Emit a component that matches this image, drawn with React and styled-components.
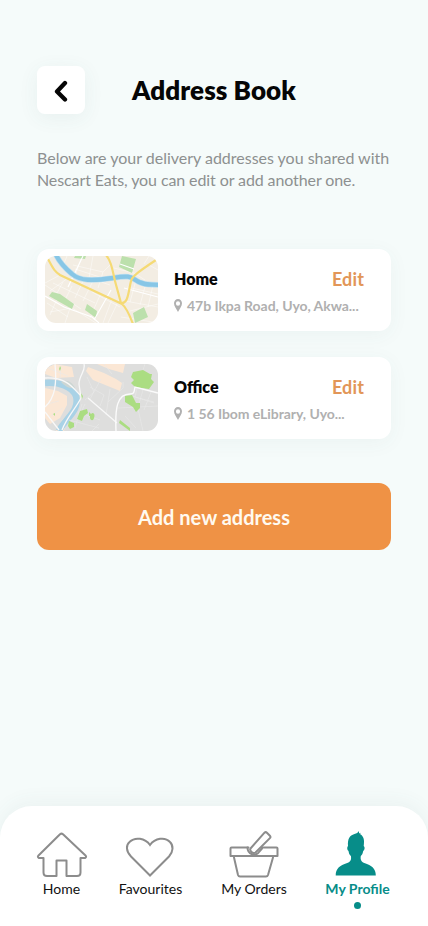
import React from "react";
import styled, { createGlobalStyle } from "styled-components";

const GlobalStyle = createGlobalStyle`
  * { box-sizing: border-box; }
  body { margin: 0; background: #f5fbfa; font-family: Lato, sans-serif; }
  button { font-family: inherit; border: 0; padding: 0; cursor: pointer; }
`;

const Screen = styled.div`
  width: 428px;
  height: 926px;
  display: flex;
  flex-direction: column;
  overflow: hidden;
  background: #f5fbfa;
`;

const Header = styled.header`
  display: flex;
  align-items: center;
  gap: 47px;
  height: 48px;
  margin: 66px 37px 0;
`;

const BackButton = styled.button`
  width: 48px;
  height: 48px;
  display: grid;
  place-items: center;
  border-radius: 8px;
  background: #fff;
  box-shadow: 0 4px 20px rgba(60, 100, 100, 0.07);
`;

const Title = styled.h1`
  margin: 0;
  font-size: 26px;
  line-height: 32px;
  font-weight: 800;
  letter-spacing: 0.08px;
  color: #050505;
  white-space: nowrap;
`;

const Intro = styled.p`
  margin: 33px 0 0 37px;
  font-size: 16px;
  line-height: 22px;
  color: #8d9090;
  white-space: nowrap;
`;

const IntroLine = styled.span`
  display: block;
  letter-spacing: ${(p) => p.$tracking}px;
`;

const AddressList = styled.section`
  display: flex;
  flex-direction: column;
  gap: 26px;
  margin: 58px 37px 0;
`;

const AddressCard = styled.article`
  display: flex;
  height: 82px;
  padding: 7px 8px;
  border-radius: 12px;
  background: #fff;
  box-shadow: 0 4px 20px rgba(60, 100, 100, 0.05);
`;

const MapThumb = styled.svg`
  display: block;
  flex: none;
  width: 113px;
  height: 67px;
  border-radius: 11px;
`;

const AddressBody = styled.div`
  flex: 1;
  margin-left: 16px;
  padding-top: 11px;
`;

const AddressTop = styled.div`
  display: flex;
  justify-content: space-between;
  align-items: center;
  height: 24px;
  padding-right: 19px;
`;

const AddressName = styled.h2`
  margin: 0 0 2px;
  font-size: 16px;
  font-weight: 800;
  color: #050505;
`;

const EditButton = styled.button`
  background: none;
  color: #e29658;
  font-size: 18px;
  font-weight: 700;
  letter-spacing: 0.15px;
`;

const AddressLine = styled.div`
  display: flex;
  align-items: center;
  gap: 5px;
  height: 18px;
  margin-top: 5px;
  font-size: 14px;
  font-weight: 700;
  letter-spacing: -0.05px;
  color: #b0b0b0;
  white-space: nowrap;
`;

const AddButton = styled.button`
  height: 67px;
  margin: 44px 37px 0;
  padding-top: 1px;
  border-radius: 12px;
  background: #ef9245;
  color: #fffaf0;
  font-size: 20px;
  font-weight: 700;
`;

const NavBar = styled.nav`
  display: flex;
  height: 120px;
  margin-top: auto;
  padding: 22px 0 0 29px;
  border-radius: 32px 32px 0 0;
  background: #fff;
  box-shadow: 0 -4px 20px rgba(60, 100, 100, 0.06);
`;

const NavItem = styled.a`
  display: flex;
  flex-direction: column;
  align-items: center;
  width: ${(p) => p.$width}px;
  font-size: 14px;
  line-height: 18px;
  font-weight: ${(p) => (p.$active ? 700 : 400)};
  color: ${(p) => (p.$active ? "#078d89" : "#111")};
  white-space: nowrap;
`;

const NavIcon = styled.svg`
  display: block;
  width: 52px;
  height: 52px;
  fill: none;
  stroke: #8c8c8c;
  stroke-width: 2;
  stroke-linejoin: round;
  stroke-linecap: round;
`;

const ActiveDot = styled.span`
  width: 7px;
  height: 7px;
  margin-top: 4px;
  border-radius: 50%;
  background: #078d89;
`;

const CityMap = () => (
  <MapThumb viewBox="0 0 113 67" fill="none">
    <path d="M0 0h113v67H0z" fill="#f3ede3" />
    <g stroke="#fff" strokeWidth="0.45">
      <path d="M0 27 15 19M5 35 23 22M22 0 18 10M37 0 30 20M28 9 58 16 66 8M48 0 44 22M58 16 53 32M39 23 30 42M48 25 38 45M18 26 12 37M27 30 21 42M0 29 36 53M8 27 50 47M5 56 27 52 51 67M2 47 23 61M12 43 5 59M25 52 20 67M56 37 45 62M67 43 58 67M47 36 75 51M72 48 63 67M91 24 85 46M101 27 95 49M108 29 103 51M82 31 113 38M80 45 113 51M85 55 113 48M69 12 89 17 100 24M83 18 90 24M104 9 113 14M65 29 53 25M30 13 58 22M76 61 108 66M104 0 99 8" />
    </g>
    <path d="m30 0 11 0-1 3-11-1ZM77 0l14 3-4 14-13-6ZM7 36l8 2 14 10-2 5L4 40ZM42 48l10 7-1 7-11-8ZM88 57l11-6 4 10-13 6Z" fill="#bce0ac" />
    <path d="m75 8 14 5M0 40l19 11 28 10 7 6M38 0 23 31M66 34 49 64M79 32l34 9" stroke="#fff" strokeWidth="1.1" />
    <path d="M11-1c4 8 10 14 16 19 8 7 20 7 41 4 18-3 17-1 26 4 8 4 12 2 20 3" stroke="#bedff0" strokeWidth="5.6" />
    <path d="M11-1c4 8 10 14 16 19 8 7 20 7 41 4 18-3 17-1 26 4 8 4 12 2 20 3" stroke="#87c6e6" strokeWidth="4.3" />
    <path d="M3 3c5 9 6 12 12 16l62 29c5 4 8 12 11 20M61-1c5 6 6 13 9 26l6 22c7 1 7-9 10-22 1-5 10-11 25-21" stroke="#f5da75" strokeWidth="2.2" />
  </MapThumb>
);

const DistrictMap = () => (
  <MapThumb viewBox="0 0 113 67" fill="none">
    <path d="M0 0h113v67H0z" fill="#dededd" />
    <path d="m10 0 17 3 2 10-18 1-11-4V5ZM0 24l13 3 9 5v9l-7 13-10 6-5-6ZM43 3l16 6 12 6 6 4-2 8L48 16 41 7ZM52 0h28l-2 9-14-4ZM17 56l6-5-4 16H11Z" fill="#fbe7d5" />
    <path d="M0 19c14-1 27 3 31 13 4 16-11 22-17 35" stroke="#a9d2e6" strokeWidth="6.5" />
    <path d="M16 18c6-3 11 0 14 6-6 1-10-2-14-6Z" fill="#ccd6d3" />
    <g stroke="#eaeaea" strokeWidth="0.6">
      <path d="M42 13 49 28 40 36M56 15l-11 20M45 23l14 8-4 11M65 25l-4 26M40 40l-7 15M78 18v6L63 38M92 24l-2 9 19 5M98 26l-5 17M106 28l-7 18M84 31l25 8M73 44l40-2M80 52l11 12M93 45l5 22M33 48l22 8M24 56l30 8M37 40 30 64M54 60l-7 7M2 40l12-3M6 52l12-8M3 4l20 8M16 0l-1 15M59 0l8 10M100 0l-4 12" />
    </g>
    <path d="m88 8 10-2 7 4 2 0-1 5 3 3-5 7-14-2-4-4 3-3-3-3ZM80 32l7-1 4 8 4 0 0 5-4 4-3-5-8-5ZM35 47l7-2 1 4-4 3-2 5-5-2ZM44 48l4 4-4 0ZM46 50c3-3 5 2 2 6-3 1-4-3-2-6ZM24 57l5 2 0 4-4 2-2-3ZM75 56l10 8 0 3-11-8ZM35 28l3 4-1 3-2-3ZM14 5l1-3 1 2-1 3ZM8 50l2-1 0 3Z" fill="#abdd82" />
    <path d="M39 0c2 7-5 11-5 20l2 14C31 44 22 53 17 66M43 34 72 59M0 14c20-1 27 8 35 17M0 43c10-9 12-23 10-43M0 48l14 18" stroke="#f8f8f8" strokeWidth="1.3" />
    <path d="M71 67c-1-23 1-37 14-37 4 0 4-1 5-7l23 6" stroke="#fbfbfb" strokeWidth="1.4" />
  </MapThumb>
);

const PinIcon = () => (
  <svg width="8" height="13" viewBox="0 0 8 12" preserveAspectRatio="none">
    <path fillRule="evenodd" d="M4 0a4 4 0 0 1 4 4c0 2.7-2.4 5.2-4 8-1.6-2.8-4-5.3-4-8a4 4 0 0 1 4-4Zm0 2a2.1 2.1 0 1 0 0 4.2A2.1 2.1 0 0 0 4 2Z" fill="#b0b0b0" />
  </svg>
);

const HomeIcon = () => (
  <NavIcon viewBox="0 0 52 52">
    <path d="M7.500 30v14.500q0 3.500 3.500 3.500h9.500V32.500h10V48H41q3.500 0 3.500-3.500V30H49q2-1 .5-2.500L27 6.200q-1.500-1.200-3 0L2.500 27.500Q1 29 3 30Z" />
  </NavIcon>
);

const HeartIcon = () => (
  <NavIcon viewBox="0 0 52 52">
    <path d="M25 47.500 6 28.500C.7 23 1 17 4.500 14 10 8.500 20 10 25 17c5-7 15-8.500 20-3 3.500 3.500 3.500 9.500-1 14.500Z" strokeLinejoin="miter" />
  </NavIcon>
);

const BasketIcon = () => (
  <NavIcon viewBox="0 0 52 52">
    <path d="M20.500 19.500H3.500q-1 0-1 1v7.500h47v-7.500q0-1-1-1H34M6 29.500l4 17.500q.5 1.500 2 1.500h26q1.500 0 2-1.500l5-17.500" />
    <path d="m22.500 20.500 14-15.800q1.200-1.200 2.400 0l3 3q1.200 1.200 0 2.400L27.500 24.500q-2 1.500-4-.5t-1-3.500Z" />
    <path d="M19.500 19.500q0 5 4.500 6.700 3.500 1 6-1l4-4.700" />
  </NavIcon>
);

const ProfileIcon = () => (
  <NavIcon viewBox="0 0 52 52">
    <path d="M3.700 47.500c0-7 4-10 11.500-12.500 4-1.500 4.200-4 3.700-7-1.500-1-2-3-2.400-5-1.600-1-1.600-4-.5-5-.5-7 1.500-10.500 6.500-12 2-.5 3.500-1.500 4.500-3v2.500l1.500-.7-.3 1.500c3.800 2 4.300 6.200 3.500 11.700 1.500 1 1 4-.5 5-.4 2-1 4-2.400 5-.5 3 0 5.500 3.500 7 7.500 2.500 11.500 5.500 11.500 12.500Z" fill="#078d89" stroke="none" />
  </NavIcon>
);

const addresses = [
  { name: "Home", line: "47b Ikpa Road, Uyo, Akwa...", Map: CityMap },
  { name: "Office", line: "1 56 Ibom eLibrary, Uyo...", Map: DistrictMap },
];

const tabs = [
  { label: "Home", Icon: HomeIcon, width: 65 },
  { label: "Favourites", Icon: HeartIcon, width: 113 },
  { label: "My Orders", Icon: BasketIcon, width: 94 },
  { label: "My Profile", Icon: ProfileIcon, width: 113, active: true },
];

export default function App() {
  return (
    <>
      <GlobalStyle />
      <Screen>
        <Header>
          <BackButton aria-label="Back">
            <svg width="14" height="24" viewBox="0 0 14 24" fill="none">
              <path d="M11 5 3 13.500 11 21.500" stroke="#050505" strokeWidth="4.3" strokeLinecap="round" strokeLinejoin="round" />
            </svg>
          </BackButton>
          <Title>Address Book</Title>
        </Header>
        <Intro>
          <IntroLine $tracking={-0.01}>Below are your delivery addresses you shared with</IntroLine>
          <IntroLine $tracking={-0.1}>Nescart Eats, you can edit or add another one.</IntroLine>
        </Intro>
        <AddressList>
          {addresses.map(({ name, line, Map }) => (
            <AddressCard key={name}>
              <Map />
              <AddressBody>
                <AddressTop>
                  <AddressName>{name}</AddressName>
                  <EditButton>Edit</EditButton>
                </AddressTop>
                <AddressLine>
                  <PinIcon />
                  {line}
                </AddressLine>
              </AddressBody>
            </AddressCard>
          ))}
        </AddressList>
        <AddButton>Add new address</AddButton>
        <NavBar>
          {tabs.map(({ label, Icon, width, active }) => (
            <NavItem key={label} $width={width} $active={active}>
              <Icon />
              {label}
              {active && <ActiveDot />}
            </NavItem>
          ))}
        </NavBar>
      </Screen>
    </>
  );
}
